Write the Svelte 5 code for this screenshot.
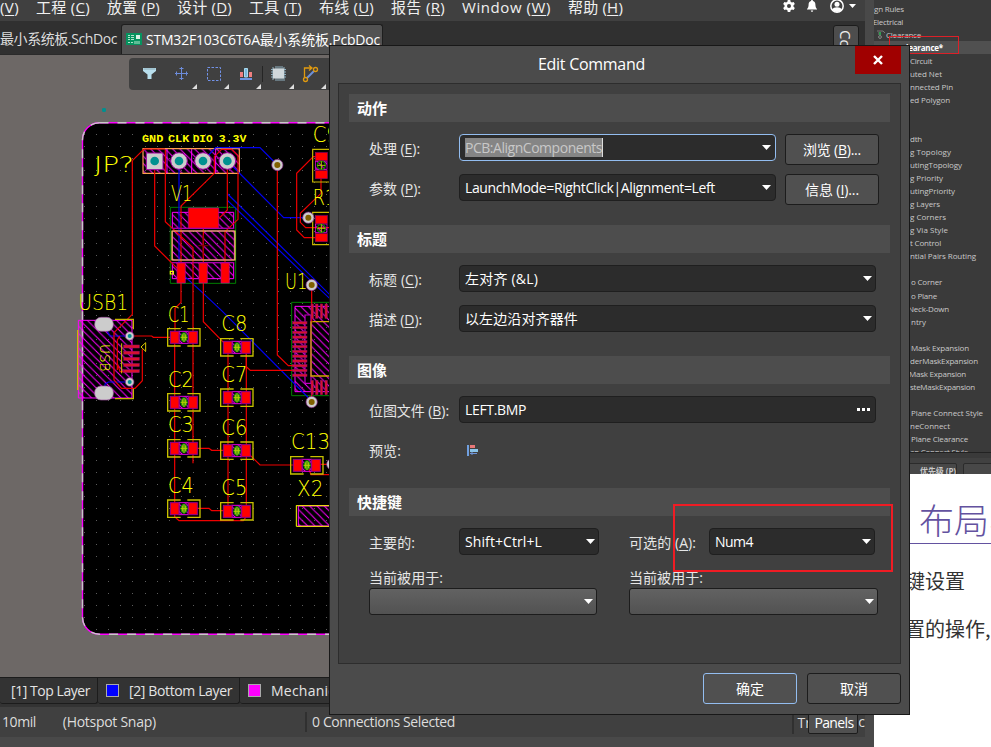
<script>
  // Spreads a label's characters so that it takes up the given width.
  function fit(node, width) {
    const natural = node.getBoundingClientRect().width;
    const count = [...node.textContent].length;
    node.style.letterSpacing = `${(width - natural) / count}px`;
  }

  const menus = [
    ['', 'V', 19], ['工程 ', 'C', 54], ['放置 ', 'P', 53], ['设计 ', 'D', 55], ['工具 ', 'T', 53],
    ['布线 ', 'U', 55], ['报告 ', 'R', 54], ['Window ', 'W', 89], ['帮助 ', 'H', 55]
  ];

  const rules = [
    ['gn Rules', 874, 30], ['Electrical', 873, 30], ['Clearance', 886, 35], ['Clearance*', 901, 42],
    ['Circuit', 910, 22], ['uted Net', 910, 32], ['nnected Pin', 910, 43], ['ed Polygon', 910, 40], null, null,
    ['dth', 910, 12], ['g Topology', 910, 41], ['utingTopology', 910, 52], ['g Priority', 910, 33],
    ['utingPriority', 910, 45], ['g Layers', 910, 30], ['g Corners', 910, 36], ['g Via Style', 910, 38],
    ['t Control', 910, 31], ['ntial Pairs Routing', 910, 66], null, ['o Corner', 911, 31], ['o Plane', 911, 26],
    ['Neck-Down', 908, 41], ['ntry', 911, 15], null, ['Mask Expansion', 911, 58], ['derMaskExpansion', 910, 68],
    ['Mask Expansion', 909, 57], ['steMaskExpansion', 910, 65], null, ['Plane Connect Style', 911, 72],
    ['neConnect', 910, 40], ['Plane Clearance', 911, 57], ['an Connect Style', 910, 58]
  ];

  const dots = [];
  for (let r = 0; r < 42; r++)
    for (let c = 0; c < 21; c++) dots.push([Math.round(84 + c * 12.1), Math.round(134 + r * 12.07)]);

  // Board geometry is kept in third-of-a-pixel units.
  const caps = [[277, 655], [277, 850], [277, 988], [277, 1169], [436, 685], [436, 836], [436, 995], [436, 1177], [646, 1039]];
  const labels = [
    ['JP?', 57, 185, 120], ['V1', 288, 273, 64], ['C9', 713, 97, 78], ['R1', 713, 285, 70], ['U1', 630, 537, 67],
    ['USB1', 10, 600, 150], ['C1', 279, 635, 64], ['C2', 279, 830, 77], ['C3', 279, 967, 77], ['C4', 279, 1149, 77],
    ['C8', 439, 663, 78], ['C7', 439, 816, 78], ['C6', 439, 975, 78], ['C5', 439, 1155, 78], ['C13', 648, 1018, 117],
    ['X2', 666, 1159, 79]
  ];
  const pins = [['GND', 201, 64], ['CLK', 279, 64], ['DIO', 353, 60], ['3.3V', 431, 83]];
  const vias = [[607, 165], [700, 323], [710, 525], [710, 876]];
</script>

{#snippet label(pre, key, post, w)}
  <span class="lab"><span use:fit={w}>{pre}{#if key}(<u>{key}</u>){/if}{post}</span></span>
{/snippet}

{#snippet arrow()}
  <svg class="arrow" width="9" height="5" viewBox="0 0 9 5"><path d="M0 0h9L4.500 5z" fill="#fff" /></svg>
{/snippet}

<div class="desk">
  <section class="editor">
    <nav class="menu">
      {#each menus as [name, key, w]}
        <span class="mi" style="width:{w}px"><span use:fit={w}>{name}(<u>{key}</u>)</span></span>
      {/each}
      <div class="tools">
        <svg width="12" height="12" viewBox="0 0 24 24"><path fill="#fff" fill-rule="evenodd" d="M9.500 0h5l.7 3.500 2.600 1.500 3.400-1.200L23.700 8.200 21 10.500v3l2.700 2.300-2.500 4.400-3.400-1.200-2.600 1.500-.7 3.500h-5l-.7-3.500L6.200 19l-3.400 1.200L.3 15.800 3 13.500v-3L.3 8.200 2.800 3.800 6.200 5l2.600-1.500zM12 8a4 4 0 100 8 4 4 0 000-8z" /></svg>
        <svg class="bell" width="10" height="12" viewBox="0 0 10 12"><path fill="#fff" d="M5 0c.6 0 1 .4 1 1 1.600.5 2.400 1.800 2.400 3.600 0 2.400.6 3.400 1.600 4.400v.6H0V9c1-1 1.600-2 1.600-4.400C1.600 2.800 2.400 1.500 4 1c0-.6.4-1 1-1zM3.800 10.500h2.400c0 1.800-2.400 1.800-2.400 0z" /></svg>
        <svg class="user" width="14" height="14" viewBox="0 0 14 14"><circle cx="7" cy="7" r="6.200" fill="none" stroke="#fff" stroke-width="1.500" /><circle cx="7" cy="5.200" r="2.500" fill="#fff" /><path d="M2.300 10.500c1.200-3 8.200-3 9.400 0-2 3.300-7.400 3.300-9.400 0z" fill="#fff" /></svg>
        <svg width="7" height="4" viewBox="0 0 7 4"><path d="M0 0h7L3.500 4z" fill="#fff" /></svg>
      </div>
    </nav>
    <div class="tabs">
      <div class="tab first"><span use:fit={117}>最小系统板.SchDoc</span></div>
      <div class="tab active">
        <svg width="16" height="12" viewBox="0 0 16 12"><path fill="#06935f" d="M0 0h16v12H0z" /><path fill="#d9f2e5" d="M10 2h4v4h-4z" /><path d="M2 2.500h2M5 2.500h3M2 4.500h2M5 4.500h3M2 6.500h2M5 6.500h3M2 9.500h2M5 9.500h2M9 8v3M11 8v3M13 8v3" stroke="#b5e3cd" fill="none" /></svg>
        <span use:fit={234}>STM32F103C6T6A最小系统板.PcbDoc</span>
      </div>
      <div class="side"><span>Co</span></div>
    </div>
    <div class="canvas">
      <svg class="pcb" width="330" height="622" viewBox="0 55 330 622">
        <defs>
          <pattern id="hatch" width="7" height="7" patternUnits="userSpaceOnUse"><path d="M-1 -1L8 8M-1 6L1 8M6 -1L8 1" stroke="#f0f" stroke-width="1" /></pattern>
          <pattern id="hatch3" width="22" height="22" patternUnits="userSpaceOnUse"><path d="M-2 -2L24 24M-2 20L2 24M20 -2L24 2" stroke="#f0f" stroke-width="3" /></pattern>
        </defs>
        <rect x="82.500" y="122.500" width="300" height="511.500" rx="17" fill="#000" />
        {#each dots as [x, y]}<rect {x} {y} width="1" height="1" fill="#5c5c5c" />{/each}
        <g fill="none" stroke-width="1.400">
          <rect x="82.500" y="122.700" width="300" height="511.500" rx="17" stroke="#f0f" />
          <rect x="82.500" y="122.700" width="300" height="511.500" rx="17" stroke="#c9c9c9" stroke-dasharray="9 9" />
        </g>
        <g transform="translate(75 110) scale(.33333)" fill="none" stroke-width="3.600">
          <path d="M292 307H476V355H292zM292 363H478V450H292zM292 458H476V506H292z" fill="url(#hatch3)" stroke="#f0f" stroke-width="3" />
          <path d="M204 116H493V190H204z" fill="url(#hatch3)" stroke="#ffa050" />
          <path d="M276 117V190M350 117V190M422 117V190" stroke="#f0f" stroke-width="3" />
          <path d="M10 631H171V864H10z" fill="url(#hatch3)" stroke="#f0f" stroke-width="3" />
          <path d="M660 589H780V845H660z" fill="url(#hatch3)" stroke="#f0f" stroke-width="3" />
          <path d="M690 615H708V820H690z" fill="#000" stroke="#c000c0" />
          <path d="M670 1188H780V1248H670z" fill="url(#hatch3)" stroke="#f0f" stroke-width="3" />
          <path d="M286 292H482V520H286zM780 577H650V857H780" stroke="#008000" stroke-width="3" />
          <g stroke="#0000f0">
            <path d="M312 170V460M330 500L376 542L440 602L710 873M384 153L422 113H555L607 165M457 153L626 323H700M458 252L710 500L790 580M458 272L700 505L790 590M90 652L105 678H164M90 850V822L100 816H164" />
          </g>
          <g stroke="#e00">
            <path d="M172 153V613L117 668V810L140 835H180L202 812V718M172 152L207 117H270" />
            <path d="M239 165V408L312 480V500L318 520V577L300 595V680M271 120V335L354 413V1060M318 460V288L418 190V140L440 118H470L489 137V328L450 365V480M457 165V300L432 325M385 350V635L458 710" />
            <path d="M607 170V735L640 767H690M514 718V770L526 781H690M710 530V640M738 140H715L665 190V360L688 383H738M738 200V250L676 310V337L692 353H765" />
            <path d="M299 700V1220L312 1232H505L514 1220V720M459 710V1210M164 678H230L235 682H290M127 760L135 785H150M127 780V690L135 678M360 1015H402L410 1021H450M360 1195H402L410 1202H450M520 1030L555 1065H660M695 1060L708 1094H765M720 1063H765M710 845V876" />
          </g>
          <path d="M291 363H480V450H291z" stroke="#e8e040" />
          <path d="M290 355H478M290 458H478" stroke="#a000a0" stroke-width="3" />
          <path d="M370 407H400M384 375V440" stroke="#800000" stroke-width="3" />
          <path d="M286 484h9v8h-9z" stroke="#ff0" />
          <path d="M664 1187H780M664 1186V1249H780" stroke="#ff0" stroke-width="3" />
          <path d="M120 628H175V658M120 866H175V836M8 660V840" stroke="#c8b800" stroke-width="4" />
          <path d="M712 635H780M708 634V798H780" stroke="#d0a000" stroke-width="4" />
          <g fill="#f00" stroke="#b000a0" stroke-width="2">
            <path d="M340 294h91v60h-91zM306 459h25v60h-25zM372 459h25v60h-25zM438 459h25v60h-25z" />
          </g>
          <g fill="#d81030" stroke="#90106a" stroke-width="1.500">
            {#each [0, 1, 2, 3, 4] as i}<rect x="146" y={705 + i * 18.500} width="47" height="9" />{/each}
            {#each Array(12) as _, i}<rect x="653" y={635 + i * 14.300} width="43" height="7" />{/each}
            {#each Array(5) as _, i}<rect x={708 + i * 14} y="582" width="7" height="43" /><rect x={708 + i * 14} y="811" width="7" height="43" />{/each}
          </g>
          <path d="M212 698L198 711L212 724zM140 700V790" stroke="#d8c800" stroke-width="3" />
          {#each [[715, 118, 98], [715, 307, 97]] as [x, y, h]}
            <path d="M{x + 60} {y}H{x - 2}V{y + h}H{x + 60}" stroke="#c8b800" />
            <rect x={x + 7} y={y + 35} width="34" height="26" fill="url(#hatch3)" stroke="#f0f" stroke-width="2" />
            <rect x={x + 6} y={y + 10} width="36" height="24" fill="#f00" stroke="#900060" stroke-width="2" />
            <rect x={x + 6} y={y + 64} width="36" height="24" fill="#f00" stroke="#900060" stroke-width="2" />
            <circle cx={x + 24} cy={y + 48} r="12" stroke="#108000" stroke-width="4" /><path d="M{x + 12} {y + 48}h24M{x + 24} {y + 36}v24" stroke="#b0c800" stroke-width="3" />
          {/each}
          {#each caps as [x, y]}
            <g transform="translate({x} {y})">
              <path d="M40 1H1V53H40M60 1H98V53H60" stroke="#c8c000" stroke-width="4" />
              <rect x="35" y="9" width="28" height="36" fill="url(#hatch3)" stroke="#e000e0" stroke-width="3" />
              <rect x="9" y="9" width="26" height="36" fill="#f00" stroke="#900090" stroke-width="3" />
              <rect x="64" y="9" width="26" height="36" fill="#f00" stroke="#900090" stroke-width="3" />
              <ellipse cx="50" cy="27" rx="11" ry="15" fill="#108010" />
              <path d="M40 27h20M50 14v27M45 18v18M55 18v18" stroke="#b8d000" stroke-width="3" />
            </g>
          {/each}
          <rect x="214" y="129" width="50" height="50" fill="#ccc" stroke="#a000a0" stroke-width="3" />
          {#each [312, 384, 457] as x}<circle cx={x} cy="153" r="25" fill="#ccc" stroke="#a000a0" stroke-width="3" />{/each}
          {#each [239, 312, 384, 457] as x}<circle cx={x} cy="153" r="13" fill="#009090" />{/each}
          {#each vias as [x, y]}<circle cx={x} cy={y} r="17" fill="#ccc" stroke="#802080" stroke-width="2" /><circle cx={x} cy={y} r="9" fill="#806000" />{/each}
          <circle cx="772" cy="1063" r="17" fill="#ccc" stroke="#802080" stroke-width="2" />
          {#each [644, 850] as y}<rect x="59" {y} width="56" height="42" rx="19" fill="#ccc" stroke="#a050a0" stroke-width="2" transform="translate(0 -22)" /><circle cx="87" {y} r="6" fill="#009090" />{/each}
          {#each [678, 816] as y}<circle cx="164" cy={y} r="13" fill="#ccc" stroke="#802080" stroke-width="2" /><circle cx="164" cy={y} r="6" fill="#009090" />{/each}
          <g class="silk" stroke="none">
            {#each labels as [t, x, y, w]}<text {x} {y} textLength={w} lengthAdjust="spacingAndGlyphs">{t}</text>{/each}
            <text transform="translate(76 702) rotate(90)" font-size="42" textLength="82" lengthAdjust="spacingAndGlyphs" class="usb">USB</text>
            {#each pins as [t, x, w]}<text class="pin" {x} y="97" textLength={w} lengthAdjust="spacingAndGlyphs">{t}</text>{/each}
          </g>
        </g>
      </svg>
      <div class="toolbar">
        <svg width="201" height="32" viewBox="129 58 201 32">
          <path d="M143 68h13v3l-4.500 3.500V79h-4v-4.500L143 71z" fill="#b9dfed" />
          <path d="M143.500 68.500h12v1h-12z" fill="#8ba9b5" />
          <path d="M175 73.500h13M181.500 67v13M179.500 68.500h4M179.500 78.500h4M176.500 71.500v4M186.500 71.500v4" stroke="#6c8cdb" stroke-width="1" />
          <path d="M207.500 67.500h13v13h-13z" fill="none" stroke="#7292e8" stroke-dasharray="2.500 1.500" />
          <path d="M240 72h3v5h-3zM249 72h3v5h-3z" fill="#f08080" /><path d="M244.500 68.500h3V77h-3z" fill="#79b8db" stroke="#a9daf0" /><path d="M240 78h12v2h-12z" fill="#6d94e0" />
          <path d="M262.500 66v16" stroke="#252525" />
          <path d="M273 67v13M276 66v15M278 66v15M280 66v15M282 66v15M284 67v14M271 69.500h15M271 72h15M271 74.500h15M271 77h15" stroke="#8fb0c0" stroke-width="1" /><path d="M273 68.500h11v10h-11z" fill="#d0d8dc" />
          <path d="M304.500 77v-9H311M309 65.500l3 2.500-3 2.500" stroke="#e09a10" stroke-width="1.300" fill="none" /><path d="M307 78l7-7" stroke="#6d8fd8" stroke-width="2" /><circle cx="305.500" cy="79.500" r="2" fill="none" stroke="#e09a10" stroke-width="1.300" /><circle cx="315.500" cy="69.500" r="2" fill="none" stroke="#e09a10" stroke-width="1.300" />
          {#each [197, 229, 261, 294, 326] as x}<path d="M{x} 84v5h-5z" fill="#ddd" />{/each}
        </svg>
      </div>
    </div>
    <div class="layers">
      <div class="layer l1"><span use:fit={79}>[1] Top Layer</span></div>
      <div class="layer l2"><i class="blue"></i><span use:fit={103}>[2] Bottom Layer</span></div>
      <div class="layer l3"><i class="pink"></i><span use:fit={88}>Mechanical 1</span></div>
    </div>
    <div class="status">
      <span class="mil"><span use:fit={34}>10mil</span></span>
      <span class="snap"><span use:fit={93}>(Hotspot Snap)</span></span>
      <span class="conn"><span use:fit={143}>0 Connections Selected</span></span>
      <span class="tr">Track</span>
      <div class="panels"><span use:fit={39}>Panels</span></div>
      <span class="cut">c</span>
    </div>
  </section>

  <section class="rules">
    <div class="tree">
      {#each rules as r, i}
        <div class="rule" class:sel={i === 3}>{#if r}<span use:fit={r[2]} style="margin-left:{r[1] - 874}px">{r[0]}</span>{/if}</div>
      {/each}
    </div>
    <div class="foot"><div class="fb"><span use:fit={36}>优先级 (P)</span></div><div class="fb rest"></div></div>
    <svg class="leaf" width="10" height="9" viewBox="0 0 10 9"><path d="M1 1h6l2 2M3 2v3" stroke="#777" fill="none" /><path d="M3 2h2v3H3z" fill="#2f9a50" /><circle cx="4" cy="7" r="1.400" fill="none" stroke="#888" /></svg>
    <div class="mark"></div>
  </section>

  <section class="doc">
    <h1>布局与</h1>
    <p>键设置</p>
    <p class="second">置的操作,</p>
  </section>

  <section class="dialog">
    <header><span use:fit={107}>Edit Command</span><div class="close"><svg width="10" height="10" viewBox="0 0 10 10"><path d="M1 1l8 8M9 1L1 9" stroke="#fff" stroke-width="2.400" /></svg></div></header>
    <main>
      <div class="sec">
        <h2><span use:fit={30}>动作</span></h2>
        <div class="row">{@render label('处理 ', 'E', ':', 51)}<div class="box focus"><mark use:fit={138}>PCB:AlignComponents</mark>{@render arrow()}</div><div class="btn"><span use:fit={58}>浏览 (<u>B</u>)...</span></div></div>
        <div class="row">{@render label('参数 ', 'P', ':', 52)}<div class="box"><span use:fit={250}>LaunchMode=RightClick|Alignment=Left</span>{@render arrow()}</div><div class="btn"><span use:fit={54}>信息 (<u>I</u>)...</span></div></div>
      </div>
      <div class="sec">
        <h2><span use:fit={30}>标题</span></h2>
        <div class="row">{@render label('标题 ', 'C', ':', 53)}<div class="box wide"><span use:fit={73}>左对齐 (&amp;L)</span>{@render arrow()}</div></div>
        <div class="row">{@render label('描述 ', 'D', ':', 53)}<div class="box wide"><span use:fit={113}>以左边沿对齐器件</span>{@render arrow()}</div></div>
      </div>
      <div class="sec tall">
        <h2><span use:fit={30}>图像</span></h2>
        <div class="row">{@render label('位图文件 ', 'B', ':', 80)}<div class="box wide"><span use:fit={61}>LEFT.BMP</span><svg width="13" height="3" viewBox="0 0 13 3"><path d="M0 0h3v3H0zM5 0h3v3H5zM10 0h3v3h-3z" fill="#fff" /></svg></div></div>
        <div class="row">{@render label('预览', '', ':', 32)}<svg class="prev" width="11" height="11" viewBox="0 0 11 11"><path d="M0 0h2v11H0z" fill="#70a0e0" /><path d="M3 0h5v3H3z" fill="#e87878" /><path d="M3 4h8v3H3z" fill="#8ac4e8" /><path d="M3 8.500h7M5 7v3" stroke="#6d94d8" /></svg></div>
      </div>
      <div class="sec">
        <h2><span use:fit={45}>快捷键</span></h2>
        <div class="row">{@render label('主要的', '', ':', 46)}<div class="box short"><span use:fit={77}>Shift+Ctrl+L</span>{@render arrow()}</div><span class="opt"><span use:fit={67}>可选的 (<u>A</u>):</span></span><div class="box num"><span use:fit={38}>Num4</span>{@render arrow()}</div></div>
        <div class="used">
          <div class="u1"><span use:fit={74}>当前被用于:</span><div class="grey">{@render arrow()}</div></div>
          <div class="u2"><span use:fit={74}>当前被用于:</span><div class="grey">{@render arrow()}</div></div>
        </div>
      </div>
    </main>
    <footer><div class="btn ok"><span use:fit={28}>确定</span></div><div class="btn"><span use:fit={28}>取消</span></div></footer>
  </section>
  <div class="callout"></div>
</div>

<style>
  :global(body) { margin: 0; overflow: hidden; }
  .desk { position: relative; width: 991px; height: 747px; overflow: hidden; background: #fff; font: 14px/20px "Open Sans", "Noto Sans CJK SC", sans-serif; color: #eee; white-space: nowrap; }
  .desk * { box-sizing: border-box; }
  u { text-underline-offset: 2px; text-decoration-thickness: 1px; }
  .editor { position: absolute; left: 0; top: 0; width: 874px; height: 747px; background: #494949; display: flex; flex-direction: column; }
  .menu { height: 21px; width: 865px; background: #404040; display: flex; gap: 17px; font-size: 15px; line-height: 15px; color: #f0f0f0; }
  .mi { flex: none; }
  .tools { margin-left: auto; display: flex; align-items: center; height: 12px; padding-right: 9px; }
  .bell { margin-left: 12px; }
  .user { margin-left: 13px; }
  .tools svg:last-child { margin-left: 5px; }
  .tabs { height: 34px; width: 865px; background: #303030; display: flex; align-items: flex-start; border-bottom: 1px solid #2a2a2a; }
  .tab { height: 33px; padding-top: 8px; color: #ddd; }
  .first { width: 121px; }
  .active { margin-top: 3px; width: 262px; height: 30px; padding: 5px 0 0 4px; display: flex; gap: 4px; background: #525252; border: 1px solid #1e1e1e; border-bottom: 0; border-radius: 3px 3px 0 0; color: #fff; }
  .active svg { margin-top: 3px; flex: none; }
  .side { margin: 4px 6px 0 auto; width: 26px; height: 30px; border: 1px solid #1c1c1c; border-radius: 3px; background: #4d4d4d; writing-mode: vertical-rl; font-size: 15px; line-height: 24px; padding-top: 4px; overflow: hidden; }
  .canvas { height: 622px; background: #6d6866; position: relative; width: 865px; }
  .pcb { display: block; }
  .toolbar { position: absolute; left: 129px; top: 3px; width: 220px; height: 32px; background: #404040; border-radius: 4px; }
  .silk { fill: #ff0; font-family: "DejaVu Sans", sans-serif; font-weight: 200; font-size: 65px; }
  .silk .pin { font-size: 32px; font-family: "Liberation Mono", monospace; font-weight: 700; }
  .silk .usb { font-size: 40px; }
  .layers { height: 30px; background: #333; border-top: 1px solid #1c1c1c; display: flex; width: 874px; }
  .layer { height: 26px; display: flex; align-items: center; border: solid #1c1c1c; border-width: 0 1px 1px 0; border-radius: 0 0 3px 3px; color: #e4e4e4; }
  .l1 { width: 98px; padding-left: 11px; }
  .l2 { width: 142px; padding-left: 8px; gap: 10px; }
  .l3 { width: 200px; padding-left: 8px; gap: 10px; }
  .layer i { width: 13px; height: 13px; border: 1px solid #aaa; margin-top: -1px; flex: none; }
  .blue { background: #00f; }
  .pink { background: #f0f; }
  .status { height: 30px; width: 865px; background: #404040; display: flex; align-items: center; color: #ddd; overflow: hidden; }
  .mil { width: 63px; padding-left: 2px; }
  .snap { width: 243px; }
  .conn { width: 489px; border-left: 2px solid #303030; padding-left: 5px; }
  .tr { width: 16px; height: 23px; border-left: 2px solid #303030; padding-left: 3px; overflow: hidden; line-height: 23px; }
  .panels { width: 50px; height: 21px; margin-top: 3px; border: 1px solid #1c1c1c; border-radius: 2px; background: #505050; padding-left: 5px; line-height: 18px; color: #fff; }
  .rules { position: absolute; left: 874px; top: 0; width: 117px; height: 474px; background: #3a3a3a; overflow: hidden; font-size: 8px; color: #c9c9c9; }
  .tree { height: 453px; padding-top: 1.500px; overflow: hidden; border-bottom: 1px solid #222; }
  .rule { height: 13.050px; line-height: 13px; }
  .rule span { display: inline-block; }
  .sel { background: #505050; font-weight: 700; color: #fff; }
  .foot { height: 21px; margin-top: 5px; background: #414141; padding-top: 5px; display: flex; gap: 6px; }
  .fb { width: 102px; height: 20px; padding-left: 45px; line-height: 14px; border: 1px solid #2b2b2b; background: #484848; border-radius: 2px; font-weight: 700; }
  .leaf { position: absolute; left: 2px; top: 30px; }
  .mark { position: absolute; left: 15px; top: 36px; width: 70px; height: 18px; border: 1px solid #dc2028; }
  .doc { position: absolute; left: 874px; top: 474px; width: 117px; height: 273px; background: #fff; color: #333; overflow: hidden; font-family: "Noto Sans CJK SC", sans-serif; z-index: 1; }
  h1 { margin: 0; height: 70px; padding: 20px 0 0 45px; font-size: 35px; line-height: 50px; font-weight: 300; color: #6352a0; border-bottom: 1px solid #6352a0; }
  p { margin: 22px 0 0 31px; font-size: 20px; line-height: 30px; }
  p.second { margin-top: 18px; }
  .dialog { position: absolute; left: 329px; top: 45px; width: 581px; height: 670px; background: #4b4b4b; border: 1px solid #181818; display: flex; flex-direction: column; padding: 0 8px; z-index: 2; color: #fff; }
  header { height: 37px; display: flex; justify-content: space-between; font-size: 16px; padding-left: 200px; line-height: 37px; }
  .close { width: 46px; height: 28px; background: #a00000; display: flex; align-items: center; justify-content: center; }
  main { height: 581px; border: 1px solid #2d2d2d; background: #404040; padding: 10px 10px 0; }
  .sec { height: 131px; }
  .sec.tall { height: 132px; }
  h2 { margin: 0 0 12px; height: 28px; background: #4d4d4d; padding-left: 8px; font-size: 15px; line-height: 28px; font-weight: 700; }
  .row { height: 40px; padding-left: 20px; display: flex; align-items: flex-start; }
  .lab { width: 90px; height: 28px; line-height: 29px; color: #e6e6e6; flex: none; }
  .box { width: 317px; height: 27px; border: 1px solid #1f1f1f; border-radius: 4px; background: #2c2c2c; display: flex; align-items: center; justify-content: space-between; padding: 0 4px 0 5px; }
  .box.focus { border-color: #93bdf0; }
  .box.wide { width: 417px; }
  .box.wide > svg:not(.arrow) { margin-right: 1px; }
  .box.wide > .arrow { margin-right: -1px; }
  .box.short { width: 140px; padding-right: 3px; }
  .box.num { width: 166px; padding-right: 3px; }
  mark { background: #858585; color: #c8c8c8; border-right: 1px solid #ddd; line-height: 19px; }
  .btn { width: 94px; height: 31px; margin-left: 9px; border: 1px solid #1c1c1c; border-radius: 3px; background: #505050; display: flex; align-items: center; justify-content: center; }
  .opt { width: 110px; padding-left: 30px; line-height: 29px; flex: none; color: #e6e6e6; }
  .prev { margin: 9px 0 0 8px; }
  .used { display: flex; padding: 0 0 0 20px; gap: 32px; line-height: 20px; color: #e6e6e6; }
  .u1 { width: 228px; }
  .u2 { width: 249px; }
  .grey { height: 27px; border: 1px solid #1c1c1c; border-radius: 3px; background: linear-gradient(#626262, #525252); display: flex; align-items: center; justify-content: flex-end; padding-right: 3px; }
  footer { display: flex; justify-content: flex-end; gap: 1px; padding-top: 9px; }
  .ok { border-color: #93bdf0; }
  .callout { position: absolute; z-index: 3; left: 673px; top: 504px; width: 220px; height: 68px; border: 2px solid #ef1c24; }
</style>
